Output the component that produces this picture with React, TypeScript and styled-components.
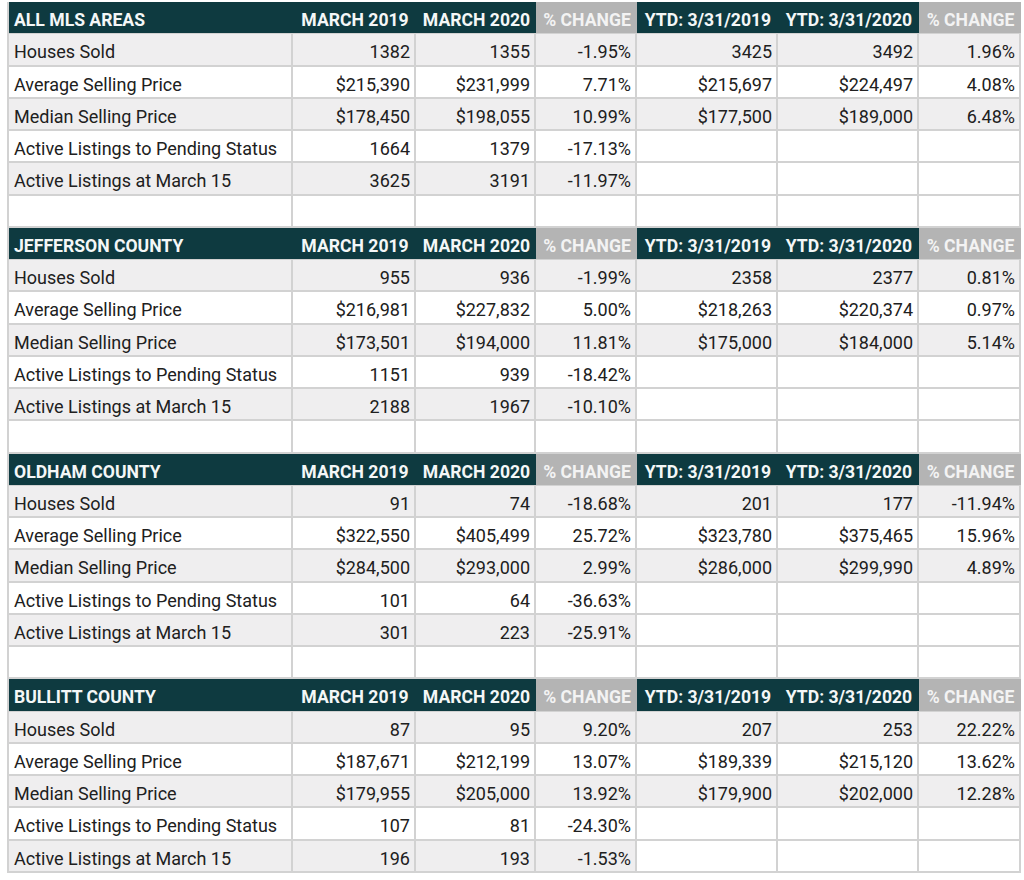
import React from "react";
import styled, { createGlobalStyle, css } from "styled-components";

const Global = createGlobalStyle`
  html, body { margin: 0; padding: 0; background: #ffffff; }
  body { font-family: Roboto, "Liberation Sans", Arial, sans-serif; color: #202020; }
`;

const Page = styled.div`
  padding: 2px 0 0 7px;
  width: 1024px;
  height: 880px;
  box-sizing: border-box;
  overflow: hidden;
`;

const Sheet = styled.div`
  display: grid;
  grid-template-columns: 284px 123px 120px 101px 141px 141px 102px;
  grid-auto-rows: 32.25px;
  border-left: 2px solid #d2d2d2;
`;

const HeadCell = styled.div<{ $tone: "dark" | "grey"; $first?: boolean }>`
  box-sizing: border-box;
  display: flex;
  align-items: center;
  justify-content: ${(p) => (p.$first ? "flex-start" : "center")};
  padding: 5px 4px 0 5px;
  font-size: 17.6px;
  font-weight: 700;
  white-space: nowrap;
  text-transform: uppercase;
  border-bottom: 1px solid #d2d2d2;
  ${(p) =>
    p.$tone === "dark"
      ? css`
          background: #0e3a40;
          color: #f4f7f7;
        `
      : css`
          background: #b4b4b4;
          color: #f3f3f3;
        `}
`;

const Cell = styled.div<{ $shade?: boolean; $label?: boolean }>`
  box-sizing: border-box;
  display: flex;
  align-items: center;
  justify-content: ${(p) => (p.$label ? "flex-start" : "flex-end")};
  padding: 5px 4px 0 5px;
  font-size: 18px;
  white-space: nowrap;
  background: ${(p) => (p.$shade ? "#efeeef" : "#ffffff")};
  border-right: 2px solid #d2d2d2;
  border-bottom: 2px solid #d2d2d2;
`;

type Row = { label: string; values: string[] };
type Section = { title: string; rows: Row[] };

const sections: Section[] = [
  {
    title: "ALL MLS AREAS",
    rows: [
      { label: "Houses Sold", values: ["1382", "1355", "-1.95%", "3425", "3492", "1.96%"] },
      { label: "Average Selling Price", values: ["$215,390", "$231,999", "7.71%", "$215,697", "$224,497", "4.08%"] },
      { label: "Median Selling Price", values: ["$178,450", "$198,055", "10.99%", "$177,500", "$189,000", "6.48%"] },
      { label: "Active Listings to Pending Status", values: ["1664", "1379", "-17.13%"] },
      { label: "Active Listings at March 15", values: ["3625", "3191", "-11.97%"] },
    ],
  },
  {
    title: "JEFFERSON COUNTY",
    rows: [
      { label: "Houses Sold", values: ["955", "936", "-1.99%", "2358", "2377", "0.81%"] },
      { label: "Average Selling Price", values: ["$216,981", "$227,832", "5.00%", "$218,263", "$220,374", "0.97%"] },
      { label: "Median Selling Price", values: ["$173,501", "$194,000", "11.81%", "$175,000", "$184,000", "5.14%"] },
      { label: "Active Listings to Pending Status", values: ["1151", "939", "-18.42%"] },
      { label: "Active Listings at March 15", values: ["2188", "1967", "-10.10%"] },
    ],
  },
  {
    title: "OLDHAM COUNTY",
    rows: [
      { label: "Houses Sold", values: ["91", "74", "-18.68%", "201", "177", "-11.94%"] },
      { label: "Average Selling Price", values: ["$322,550", "$405,499", "25.72%", "$323,780", "$375,465", "15.96%"] },
      { label: "Median Selling Price", values: ["$284,500", "$293,000", "2.99%", "$286,000", "$299,990", "4.89%"] },
      { label: "Active Listings to Pending Status", values: ["101", "64", "-36.63%"] },
      { label: "Active Listings at March 15", values: ["301", "223", "-25.91%"] },
    ],
  },
  {
    title: "BULLITT COUNTY",
    rows: [
      { label: "Houses Sold", values: ["87", "95", "9.20%", "207", "253", "22.22%"] },
      { label: "Average Selling Price", values: ["$187,671", "$212,199", "13.07%", "$189,339", "$215,120", "13.62%"] },
      { label: "Median Selling Price", values: ["$179,955", "$205,000", "13.92%", "$179,900", "$202,000", "12.28%"] },
      { label: "Active Listings to Pending Status", values: ["107", "81", "-24.30%"] },
      { label: "Active Listings at March 15", values: ["196", "193", "-1.53%"] },
    ],
  },
];

const heads: { text: string; tone: "dark" | "grey" }[] = [
  { text: "MARCH 2019", tone: "dark" },
  { text: "MARCH 2020", tone: "dark" },
  { text: "% CHANGE", tone: "grey" },
  { text: "YTD: 3/31/2019", tone: "dark" },
  { text: "YTD: 3/31/2020", tone: "dark" },
  { text: "% CHANGE", tone: "grey" },
];

export default function App() {
  return (
    <Page>
      <Global />
      <Sheet>
        {sections.map((s, si) => (
          <React.Fragment key={s.title}>
            <HeadCell $tone="dark" $first>
              {s.title}
            </HeadCell>
            {heads.map((h, hi) => (
              <HeadCell key={hi} $tone={h.tone}>
                {h.text}
              </HeadCell>
            ))}
            {s.rows.map((r, ri) => {
              const shade = ri % 2 === 0;
              return (
                <React.Fragment key={ri}>
                  <Cell $label $shade={shade}>
                    {r.label}
                  </Cell>
                  {Array.from({ length: 6 }).map((_, ci) => {
                    const v = r.values[ci];
                    return (
                      <Cell key={ci} $shade={shade && v !== undefined}>
                        {v ?? ""}
                      </Cell>
                    );
                  })}
                </React.Fragment>
              );
            })}
            {si < sections.length - 1 &&
              Array.from({ length: 7 }).map((_, ci) => <Cell key={"b" + ci} />)}
          </React.Fragment>
        ))}
      </Sheet>
    </Page>
  );
}
